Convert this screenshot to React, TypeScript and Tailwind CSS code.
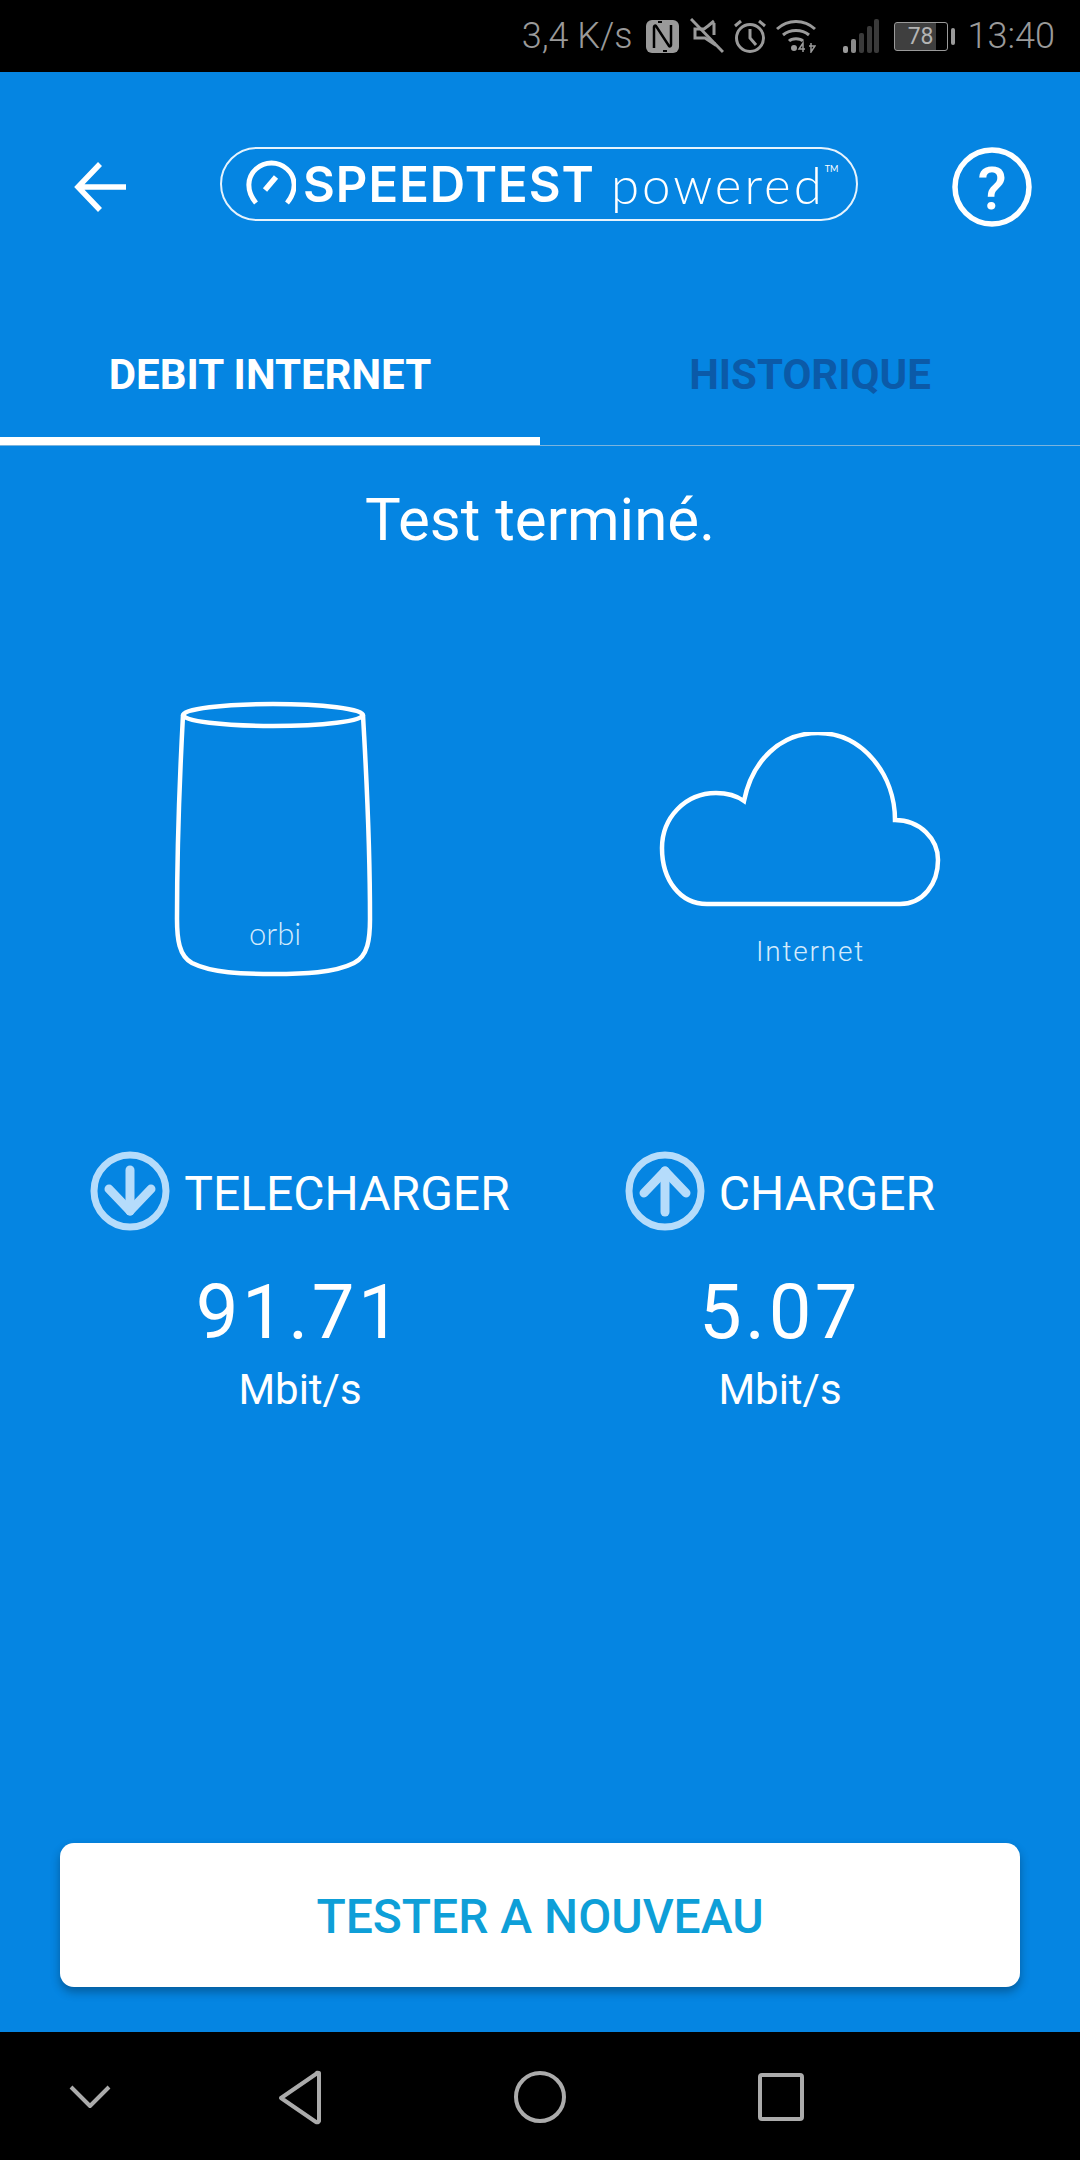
import React from 'react'

// ── Status bar icons ──────────────────────────────────────────────────────────
function NfcIcon() {
  return (
    <svg width="33" height="33" viewBox="0 0 33 33" className="ml-[13px]">
      <rect x="0" y="0" width="33" height="33" rx="6" fill="#9a9a9a" />
      <path d="M8 28V7c0-1 1-2 2-1l13 20c1 1 2 0 2-1V5" fill="none" stroke="#000" strokeWidth="2.5" />
      <path d="M12 2h4M17 31h4" stroke="#000" strokeWidth="2" />
    </svg>
  )
}

function MuteIcon() {
  return (
    <svg width="34" height="36" viewBox="0 0 34 36" className="ml-[11px]" fill="none" stroke="#9a9a9a" strokeWidth="3">
      <path d="M24 5v12M24 24v2l-9-6H5v-9h9l4-3 6-5" />
      <path d="M1 1l32 33" />
    </svg>
  )
}

function AlarmIcon() {
  return (
    <svg width="34" height="36" viewBox="0 0 34 36" className="ml-[9px]" fill="none" stroke="#9a9a9a" strokeWidth="3">
      <circle cx="17" cy="20" r="13.5" />
      <path d="M17 11v9l6 7M2 8l6-5M32 8l-6-5" />
    </svg>
  )
}

function WifiIcon() {
  return (
    <svg width="40" height="34" viewBox="0 0 40 34" className="ml-[9px]" fill="none" stroke="#9a9a9a" strokeWidth="3">
      <path d="M1 10c11-10 27-10 38 0M7 16c7-6 19-6 26 0M13 22c3-3 11-3 14 0" />
      <circle cx="18" cy="29" r="3" fill="#9a9a9a" stroke="none" />
      <path d="M27 33v-9l-4 6h6M35 24v9l4-6h-6" strokeWidth="1.5" />
    </svg>
  )
}

function SignalIcon() {
  return (
    <svg width="36" height="34" viewBox="0 0 36 34" className="ml-[27px]">
      <rect x="0" y="27" width="5" height="7" rx="2" fill="#9a9a9a" />
      <rect x="8" y="20" width="5" height="14" rx="2" fill="#8a8a8a" />
      <rect x="16" y="14" width="5" height="20" rx="2" fill="#3a3a3a" />
      <rect x="24" y="7" width="5" height="27" rx="2" fill="#3a3a3a" />
      <rect x="31" y="0" width="5" height="34" rx="2" fill="#3a3a3a" />
    </svg>
  )
}

function Battery() {
  return (
    <div className="ml-[15px] flex items-center">
      <div className="flex h-[29px] w-[54px] items-center justify-center rounded-[3px] border border-[#9a9a9a] bg-[linear-gradient(90deg,#3f3f3f_78%,#000_78%)] text-[23px] leading-none text-[#b4b4b4]">
        78
      </div>
      <div className="ml-[3px] h-[17px] w-[4px] rounded-sm bg-[#9a9a9a]" />
    </div>
  )
}

function StatusBar() {
  return (
    <div className="flex h-[72px] items-center justify-end bg-black pr-[25px] text-[#9a9a9a]">
      <span className="text-[36px] font-light leading-none">3,4 K/s</span>
      <NfcIcon />
      <MuteIcon />
      <AlarmIcon />
      <WifiIcon />
      <SignalIcon />
      <Battery />
      <span className="ml-[13px] text-[36px] font-light leading-none">13:40</span>
    </div>
  )
}

// ── App header with Speedtest pill ────────────────────────────────────────────
function Header() {
  return (
    <div className="flex h-[225px] items-center pb-[1px] pl-[74px] pr-[48px]">
      <svg width="52" height="50" viewBox="0 0 52 50" fill="none" stroke="#fff" strokeWidth="5.5" className="mt-[5px]">
        <path d="M52 25H5M26 2L4 25l22 23" />
      </svg>
      <div className="ml-[94px] flex h-[74px] w-[638px] items-center rounded-[37px] border-2 border-[#e6f3fd] pl-[24px] text-white">
        <svg width="50" height="50" viewBox="0 0 50 50" fill="none" stroke="#fff" strokeWidth="5">
          <path d="M10 44C0 32 1 18 10 10c9-8 22-8 31 0 9 8 10 22 0 34" />
          <path d="M19 31l11-13" strokeWidth="5.5" />
        </svg>
        <span className="ml-[7px] font-['Inter',sans-serif] text-[49px] font-semibold leading-none tracking-[1px]">
          SPEEDTEST
        </span>
        <span className="ml-[16px] font-['Lato',sans-serif] text-[51px] font-light leading-none tracking-[3px]">
          powered
        </span>
        <span className="mb-[32px] font-['Lato',sans-serif] text-[9px] leading-none">TM</span>
      </div>
      <svg width="80" height="80" viewBox="0 0 80 80" fill="none" stroke="#fff" className="ml-auto mt-[5px]">
        <circle cx="40" cy="40" r="37" strokeWidth="5.5" />
        <text
          x="40"
          y="62"
          textAnchor="middle"
          fill="#fff"
          stroke="none"
          fontFamily="Roboto, sans-serif"
          fontWeight="500"
          fontSize="60"
        >
          ?
        </text>
      </svg>
    </div>
  )
}

function Tabs() {
  return (
    <div className="border-b border-[#7ab4de]">
      <div className="grid grid-cols-2 text-center text-[42px] font-bold leading-none">
        <div className="h-[148px] border-b-[8px] border-white pt-[57px] text-white">DEBIT INTERNET</div>
        <div className="h-[148px] pt-[57px] text-[#0b5aa8]">HISTORIQUE</div>
      </div>
    </div>
  )
}

// ── Device illustrations ──────────────────────────────────────────────────────
function Router() {
  return (
    <div className="relative h-[278px] w-[202px]">
      <svg width="202" height="278" viewBox="0 0 202 278" fill="none" stroke="#fff" strokeWidth="4.5">
        <ellipse cx="101" cy="14" rx="90" ry="11" />
        <path d="M11 14C8 70 5 130 5 218c0 20 2 37 15 44 20 10 50 11 81 11s61-1 81-11c14-7 16-24 16-44 0-88-4-148-7-204" />
      </svg>
      <span className="absolute left-[77px] top-[217px] font-['Lato',sans-serif] text-[31px] font-light leading-none text-[#d4ebfc]">
        orbi
      </span>
    </div>
  )
}

function Cloud() {
  return (
    <div className="flex flex-col items-start">
      <svg width="284" height="178" viewBox="0 0 284 178" fill="none" stroke="#fff" strokeWidth="4.5">
        <path d="M86 69C94 29 122 1 160 1c45 0 77 42 77 87 25 0 43 19 43 40 0 24-15 44-38 44H49C22 172 4 148 4 116c0-30 23-55 54-55 11 0 21 3 28 8z" />
      </svg>
      <span className="ml-[98px] mt-[28px] text-[28px] font-light leading-none tracking-[1.8px] text-[#d4ebfc]">
        Internet
      </span>
    </div>
  )
}

function ArrowBadge({ up }: { up?: boolean }) {
  return (
    <svg width="80" height="80" viewBox="0 0 80 80" fill="none" stroke="#b5dcfb" strokeLinecap="round" strokeLinejoin="round">
      <circle cx="40" cy="40" r="36" strokeWidth="7" />
      <g transform={up ? 'rotate(180 40 40)' : undefined} strokeWidth="9">
        <path d="M40 19v41" />
        <path d="M19 38l21 22 21-22" />
      </g>
    </svg>
  )
}

function Result({ label, value, up }: { label: string; value: string; up?: boolean }) {
  return (
    <div className="flex flex-col items-center text-white">
      <div className="flex h-[80px] items-center gap-[14px]">
        <ArrowBadge up={up} />
        <span className="pt-[5px] text-[48px] font-normal leading-none">{label}</span>
      </div>
      <div className="mt-[43px] text-[76px] font-normal leading-none tracking-[3.5px]">{value}</div>
      <div className="mt-[19px] text-[42px] font-normal leading-none">Mbit/s</div>
    </div>
  )
}

function NavBar() {
  return (
    <div className="flex h-[128px] items-center bg-black">
      <svg width="1080" height="128" viewBox="0 0 1080 128" fill="none" stroke="#ababab" strokeWidth="4" strokeLinejoin="round">
        <path d="M71 55l19 19 19-19" />
        <path d="M319 41v48a2 2 0 0 1-3 1L281 66l35-24a2 2 0 0 1 3-1z" />
        <circle cx="540" cy="65" r="24" />
        <rect x="760" y="43" width="42" height="44" rx="2" />
      </svg>
    </div>
  )
}

export default function App() {
  return (
    <div className="flex h-[2160px] w-[1080px] flex-col overflow-hidden bg-[#0585e2] font-['Roboto',sans-serif]">
      <StatusBar />
      <Header />
      <Tabs />

      <div className="flex flex-1 flex-col">
        <h1 className="mt-[44px] text-center text-[60px] font-normal leading-none text-white">Test terminé.</h1>

        <div className="mt-[151px] flex items-start pl-[172px]">
          <Router />
          <div className="ml-[284px] mt-[31px]">
            <Cloud />
          </div>
        </div>

        <div className="mt-[172px] grid grid-cols-2 px-[60px]">
          <Result label="TELECHARGER" value="91.71" />
          <Result label="CHARGER" value="5.07" up />
        </div>

        <div className="mt-auto px-[60px] pb-[45px]">
          <button className="h-[144px] w-full rounded-[14px] bg-white pt-[4px] text-[48px] font-medium text-[#0e9fd8] shadow-[0_5px_10px_rgba(0,0,0,0.3)]">
            TESTER A NOUVEAU
          </button>
        </div>
      </div>

      <NavBar />
    </div>
  )
}
